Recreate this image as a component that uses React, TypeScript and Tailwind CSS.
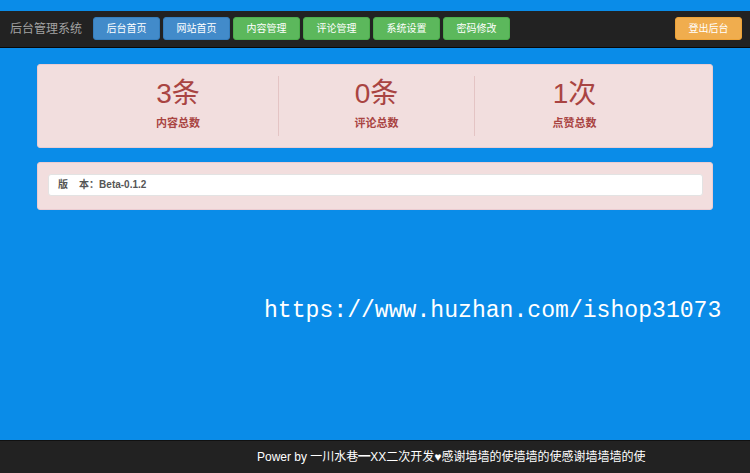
import React from "react";

const font = { fontFamily: '"Liberation Sans", "Noto Sans CJK SC", sans-serif' };

const navButtons: { label: string; cls: string }[] = [
  { label: "后台首页", cls: "bg-[#428bca] border-[#357ebd]" },
  { label: "网站首页", cls: "bg-[#428bca] border-[#357ebd]" },
  { label: "内容管理", cls: "bg-[#5cb85c] border-[#4cae4c]" },
  { label: "评论管理", cls: "bg-[#5cb85c] border-[#4cae4c]" },
  { label: "系统设置", cls: "bg-[#5cb85c] border-[#4cae4c]" },
  { label: "密码修改", cls: "bg-[#5cb85c] border-[#4cae4c]" },
];

const stats = [
  { value: "3条", label: "内容总数" },
  { value: "0条", label: "评论总数" },
  { value: "1次", label: "点赞总数" },
];

export default function App() {
  return (
    <div
      className="w-[750px] h-[473px] bg-[#0a8ce8] flex flex-col overflow-hidden"
      style={font}
    >
      {/* top navigation bar */}
      <div className="mt-[11px] h-[37px] bg-[#222222] border-b border-[#080808] flex items-center pl-[10px] pr-[8px]">
        <div className="text-[12px] text-[#a3a3a3] w-[83px] leading-none">后台管理系统</div>
        <div className="flex gap-[3px] -mt-[2px]">
          {navButtons.map((b) => (
            <div
              key={b.label}
              className={`w-[67px] h-[23px] rounded-[3px] border text-white text-[10px] flex items-center justify-center ${b.cls}`}
            >
              {b.label}
            </div>
          ))}
        </div>
        <div className="ml-auto -mt-[2px] w-[67px] h-[23px] rounded-[3px] border border-[#eea236] bg-[#f0ad4e] text-white text-[10px] flex items-center justify-center">
          登出后台
        </div>
      </div>

      {/* statistics panel */}
      <div className="mt-[16px] mx-[37px] h-[84px] bg-[#f2dede] rounded-[3px] border border-[#ebccd1] flex items-center pl-[40px]">
        {stats.map((s, i) => (
          <div
            key={s.label}
            className={`h-[60px] flex flex-col items-center justify-center text-[#a94442] ${
              i === 0 ? "w-[200px]" : i === 1 ? "w-[196px] border-l border-[#e4c4c4]" : "w-[200px] border-l border-[#e4c4c4]"
            }`}
          >
            <div className="text-[28px] leading-none -mt-[3px]">{s.value}</div>
            <div className="text-[11px] font-bold mt-[10px] leading-none">{s.label}</div>
          </div>
        ))}
      </div>

      {/* version panel */}
      <div className="mt-[14px] mx-[37px] h-[48px] bg-[#f2dede] rounded-[3px] border border-[#ebccd1] flex items-center pl-[10px] pr-[9px]">
        <div className="w-full h-[22px] -mt-[3px] bg-white rounded-[3px] border border-[#e3e3e3] flex items-center pl-[9px] text-[10px] font-bold text-[#555555]">
          版&nbsp;&nbsp;&nbsp;&nbsp;本：Beta-0.1.2
        </div>
      </div>

      {/* shop address */}
      <div
        className="mt-[90px] pl-[264px] text-white text-[23.1px] leading-none"
        style={{ fontFamily: '"Liberation Mono", monospace' }}
      >
        https://www.huzhan.com/ishop31073
      </div>

      {/* footer */}
      <div className="mt-auto h-[33px] bg-[#222222] border-t border-[#111111] flex items-center pl-[257px] text-white text-[12px] whitespace-nowrap overflow-hidden">
        Power by 一川水巷━XX二次开发♥感谢墙墙的使墙墙的使感谢墙墙墙的使
      </div>
    </div>
  );
}
